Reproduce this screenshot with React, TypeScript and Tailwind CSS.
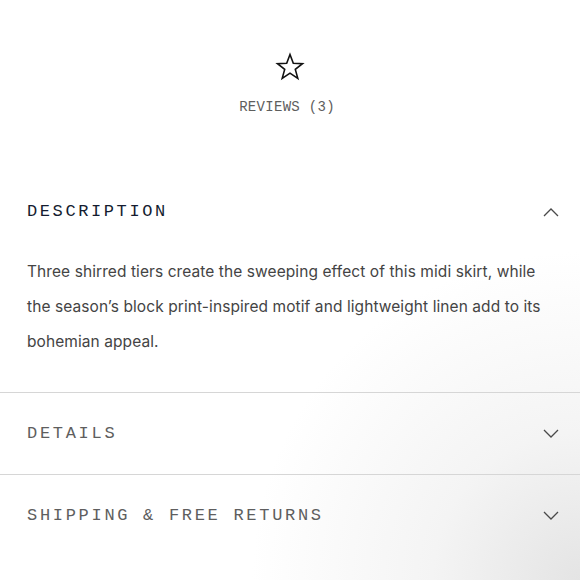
const mono = "font-['Liberation_Mono','DejaVu_Sans_Mono',monospace]"

function Chevron({ up = false }: { up?: boolean }) {
  return (
    <svg width="16" height="9" viewBox="0 0 16 9" fill="none" className="shrink-0">
      <polyline
        points={up ? "1,8 8,1 15,8" : "1,1 8,8 15,1"}
        stroke="#4a4a4a"
        strokeWidth="1.3"
        fill="none"
      />
    </svg>
  )
}

function StarOutline() {
  return (
    <svg width="30" height="30" viewBox="0 0 30 30" fill="none">
      <polygon
        points="15,2.5 18.3,11.2 27.5,11.6 20.3,17.4 22.8,26.4 15,21.2 7.2,26.4 9.7,17.4 2.5,11.6 11.7,11.2"
        stroke="#111"
        strokeWidth="1.6"
        strokeLinejoin="miter"
        fill="none"
      />
    </svg>
  )
}

function Row({ label }: { label: string }) {
  return (
    <div className="flex h-[82px] items-center justify-between border-t border-[#d6d6d6] pl-[27px] pr-[21px]">
      <span className={`${mono} text-[17px] tracking-[2.7px] text-[#5e5e5e]`}>{label}</span>
      <Chevron />
    </div>
  )
}

export default function App() {
  return (
    <div className="relative h-[580px] w-[580px] overflow-hidden bg-white bg-[radial-gradient(circle_at_100%_100%,#e4e4e4_0%,#f4f4f4_18%,#ffffff_40%)]">
      <div className="flex flex-col items-center pt-[52px]">
        <StarOutline />
        <span className={`${mono} mt-[15px] pr-[6px] text-[14px] leading-[20px] tracking-[0.3px] text-[#5e5e5e]`}>
          REVIEWS (3)
        </span>
      </div>

      <div className="mt-[54px]">
        <div className="flex h-[82px] items-center justify-between pl-[27px] pr-[21px]">
          <span className={`${mono} text-[17px] tracking-[2.6px] text-[#141c30]`}>DESCRIPTION</span>
          <Chevron up />
        </div>
        <p className="px-[27px] pt-[1px] pb-[33px] font-['Inter','Noto_Sans',sans-serif] text-[15.5px] leading-[35px] tracking-[0.08px] text-[#444]">
          Three shirred tiers create the sweeping effect of this midi skirt, while the season’s block
          print-inspired motif and lightweight linen add to its bohemian appeal.
        </p>
        <Row label="DETAILS" />
        <Row label="SHIPPING & FREE RETURNS" />
      </div>
    </div>
  )
}
